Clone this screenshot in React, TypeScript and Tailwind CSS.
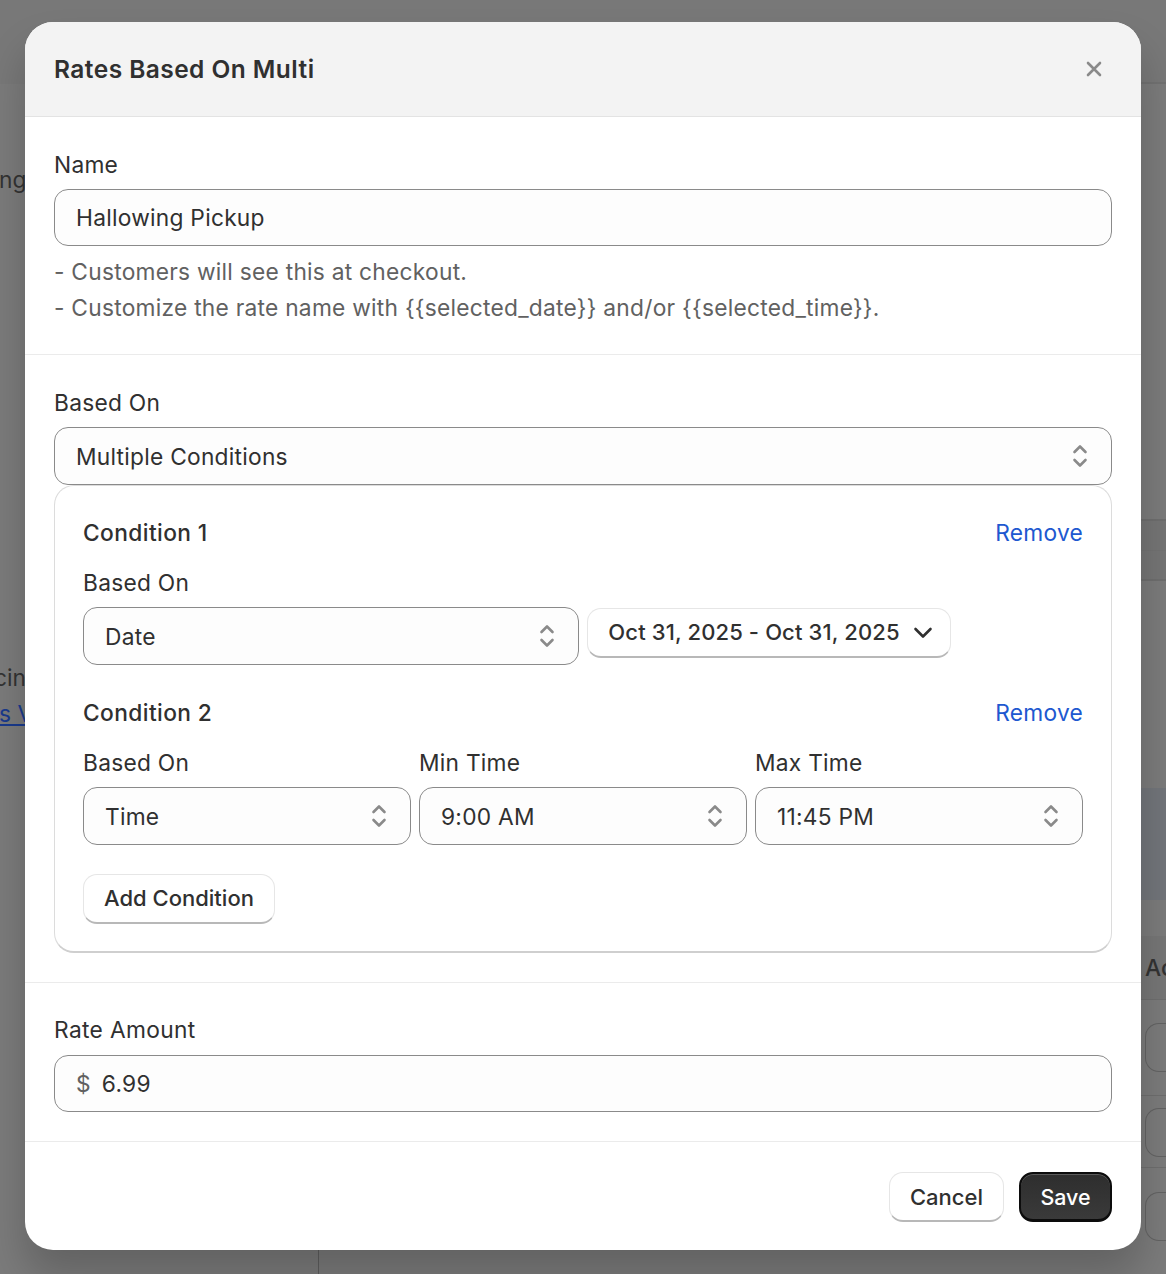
import React from "react";

function UpDown() {
  return (
    <svg viewBox="0 0 16 24" className="w-4 h-6 shrink-0" fill="none" stroke="#8a8a8a" strokeWidth="2.6" strokeLinecap="round" strokeLinejoin="round">
      <path d="M2.5 8 8 2.5 13.5 8" />
      <path d="M2.5 16 8 21.5 13.5 16" />
    </svg>
  );
}

function Select({ value, className = "" }: { value: string; className?: string }) {
  return (
    <div className={"h-[58px] flex items-center justify-between pl-[21px] pr-[23px] rounded-[14px] border border-[#8a8a8a] bg-[#fdfdfd] text-[22.75px] tracking-[0.25px] text-[#303030] " + className}>
      <span className="pt-[3px]">{value}</span>
      <UpDown />
    </div>
  );
}

function Label({ children, className = "" }: { children: React.ReactNode; className?: string }) {
  return <div className={"h-[36px] mb-[6px] pt-[1px] flex items-center text-[22.75px] tracking-[0.25px] text-[#303030] " + className}>{children}</div>;
}

function Field({ label, value }: { label: string; value: string }) {
  return (
    <div className="flex flex-col">
      <Label>{label}</Label>
      <Select value={value} />
    </div>
  );
}

function Btn({ children, className = "" }: { children: React.ReactNode; className?: string }) {
  return (
    <div className={"inline-flex items-center justify-center rounded-[14px] bg-white border border-[#e6e6e6] border-b-[2px] border-b-[#b8b8b8] text-[22px] font-medium text-[#303030] " + className}>
      {children}
    </div>
  );
}

function BgRowButton() {
  return <div className="ml-auto w-[21px] h-[49px] rounded-l-[14px] border border-r-0 border-[#636363]" />;
}

export default function App() {
  return (
    <div className="relative h-[1274px] overflow-hidden flex flex-col bg-[#7b7b7b] text-[#333] font-['Inter',sans-serif]">
      {/* page behind the overlay */}
      <div className="h-[84px] shrink-0 flex bg-[#787878]">
        <div className="w-[319px] shrink-0" />
        <div className="flex-1 border-b-[2px] border-[#717171]" />
      </div>
      <div className="flex-1 min-h-0 flex">
        <aside className="w-[319px] shrink-0 border-r border-[#5e5e5e] flex flex-col text-[22.75px] text-[#333] whitespace-nowrap">
          <div className="h-[78px]" />
          <div className="h-[36px] leading-[36px] -ml-[1px]">ng</div>
          <div className="h-[462px]" />
          <div className="h-[36px] leading-[36px] -ml-[6px]">cin</div>
          <div className="h-[36px] leading-[36px] -ml-[1px] text-[#1a3a8c] underline">s View</div>
        </aside>
        <main className="flex-1 min-w-0 flex flex-col">
          <div className="h-[435px]" />
          <div className="h-[62px] bg-[#757575] border-y-[2px] border-[#6e6e6e] flex flex-col">
            <div className="h-[30px] border-b border-[#727272]" />
          </div>
          <div className="h-[207px]" />
          <div className="h-[112px] bg-[#72757a]" />
          <div className="h-[36px]" />
          <div className="h-[64px] bg-[#767676] border-b border-[#6e6e6e] flex items-center justify-end text-[22.75px] font-[550] text-[#333]">
            <span className="w-[21px] overflow-hidden whitespace-nowrap pt-[2px]">Ac</span>
          </div>
          <div className="h-[96px] border-b border-[#6e6e6e] pt-[23px]">
            <BgRowButton />
          </div>
          <div className="h-[72px] border-b border-[#6e6e6e] pt-[12px]">
            <BgRowButton />
          </div>
          <div className="h-[106px] pt-[24px]">
            <BgRowButton />
          </div>
        </main>
      </div>

      {/* modal */}
      <div className="absolute inset-0 flex justify-center items-start pt-[22px]">
        <div className="w-[1116px] h-[1228px] rounded-[28px] bg-white overflow-hidden shadow-[0_26px_40px_rgba(0,0,0,0.2)] flex flex-col">
          <header className="h-[95px] shrink-0 bg-[#f3f3f3] border-b border-[#e3e3e3] flex items-center justify-between pl-[29px] pr-[39px]">
            <h1 className="text-[24.5px] font-semibold tracking-[0.45px] text-[#303030]">Rates Based On Multi</h1>
            <svg viewBox="0 0 16 16" className="w-4 h-4" fill="none" stroke="#8a8a8a" strokeWidth="2.6" strokeLinecap="round">
              <path d="M2 2 14 14M14 2 2 14" />
            </svg>
          </header>

          <section className="h-[238px] shrink-0 border-b border-[#ebebeb] px-[29px] pt-[30px]">
            <Label>Name</Label>
            <div className="h-[57px] flex items-center px-[21px] rounded-[14px] border border-[#8a8a8a] bg-[#fdfdfd] text-[22.75px] tracking-[0.25px] text-[#303030]">
              <span className="pt-[1px]">Hallowing Pickup</span>
            </div>
            <div className="mt-[8px] text-[22.75px] tracking-[0.25px] leading-[36px] text-[#616161]">
              <div>- Customers will see this at checkout.</div>
              <div>{"- Customize the rate name with {{selected_date}} and/or {{selected_time}}."}</div>
            </div>
          </section>

          <section className="h-[628px] shrink-0 border-b border-[#ebebeb] px-[29px] pt-[30px]">
            <Label>Based On</Label>
            <Select value="Multiple Conditions" />
            <div className="h-[468px] rounded-[20px] bg-white border border-[#dcdcdc] border-b-[2px] border-b-[#cfcfcf] px-[28px] pt-[29px]">
              <div className="h-[36px] pt-[1px] flex items-center justify-between text-[22.75px] tracking-[0.25px]">
                <span className="font-[550] tracking-[0.4px] text-[#303030]">Condition 1</span>
                <span className="text-[#2058d0]">Remove</span>
              </div>
              <Label className="mt-[14px]">Based On</Label>
              <div className="flex gap-2 items-start">
                <Select value="Date" className="w-[496px]" />
                <Btn className="mt-px w-[364px] h-[50px] gap-[13px] pl-[3px]">
                  <span className="tracking-[0.12px]">Oct 31, 2025 - Oct 31, 2025</span>
                  <svg viewBox="0 0 20 12" className="w-5 h-3" fill="none" stroke="#303030" strokeWidth="2.6" strokeLinecap="round" strokeLinejoin="round">
                    <path d="M2.5 2 10 9.5 17.5 2" />
                  </svg>
                </Btn>
              </div>
              <div className="h-[36px] pt-[1px] mt-[30px] flex items-center justify-between text-[22.75px] tracking-[0.25px]">
                <span className="font-[550] tracking-[0.4px] text-[#303030]">Condition 2</span>
                <span className="text-[#2058d0]">Remove</span>
              </div>
              <div className="mt-[14px] grid grid-cols-3 gap-2">
                <Field label="Based On" value="Time" />
                <Field label="Min Time" value="9:00 AM" />
                <Field label="Max Time" value="11:45 PM" />
              </div>
              <Btn className="mt-[29px] w-[192px] h-[50px]">Add Condition</Btn>
            </div>
          </section>

          <section className="h-[159px] shrink-0 border-b border-[#ebebeb] px-[29px] pt-[29px]">
            <div className="h-[36px] mb-[7px] flex items-center text-[22.75px] tracking-[0.35px] text-[#303030]">Rate Amount</div>
            <div className="h-[57px] flex items-center gap-[11px] px-[21px] rounded-[14px] border border-[#8a8a8a] bg-[#fdfdfd] text-[22.75px] tracking-[0.25px] text-[#303030]">
              <span className="text-[#616161] pt-[1px]">$</span>
              <span className="pt-[1px]">6.99</span>
            </div>
          </section>

          <footer className="flex-1 flex justify-end items-start gap-[15px] px-[29px] pt-[30px]">
            <Btn className="w-[115px] h-[50px] pt-[1px]">Cancel</Btn>
            <div className="inline-flex items-center justify-center w-[93px] h-[50px] pt-[1px] rounded-[14px] bg-gradient-to-b from-[#2e2e2e] to-[#3a3a3a] border-[2px] border-b-[3px] border-[#0c0c0c] shadow-[inset_0_1px_0_#5a5a5a] text-[21.4px] font-medium text-white">
              Save
            </div>
          </footer>
        </div>
      </div>
    </div>
  );
}
